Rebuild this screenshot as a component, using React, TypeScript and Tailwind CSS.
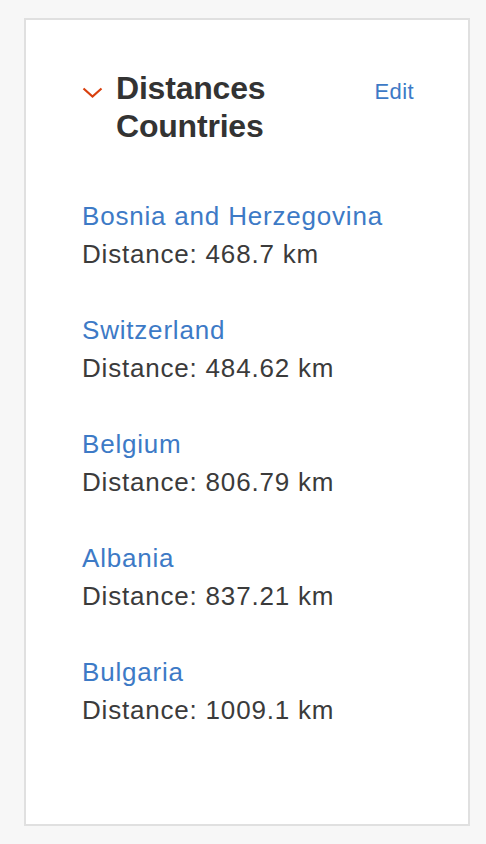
const COUNTRIES = [
  { name: 'Bosnia and Herzegovina', distance: '468.7' },
  { name: 'Switzerland', distance: '484.62' },
  { name: 'Belgium', distance: '806.79' },
  { name: 'Albania', distance: '837.21' },
  { name: 'Bulgaria', distance: '1009.1' },
]

export default function App() {
  return (
    <div className="min-h-screen bg-[#f7f7f7] pt-[18px] pl-[24px] pr-[16px] pb-[18px] font-['Liberation_Sans',Arial,sans-serif]">
      <section className="h-[808px] border-2 border-[#e0e0e0] bg-white pt-[49px] pl-[56px] pr-[54px]">
        <div className="flex items-start">
          <div className="mt-[18px] mr-[13px] w-[21px] shrink-0">
            <svg width="21" height="11" viewBox="0 0 21 11" fill="none">
              <path d="M1.5 1.5 L10.5 9.5 L19.5 1.5" stroke="#d9400e" strokeWidth="2.2" />
            </svg>
          </div>
          <h2 className="text-[32px] leading-[38px] font-bold text-[#333333] tracking-[-0.2px]">
            Distances
            <br />
            Countries
          </h2>
          <a className="ml-auto mt-[4px] text-[22px] leading-[37px] tracking-[0.4px] text-[#3d7ac6]">Edit</a>
        </div>

        <ul className="mt-[52px] flex flex-col gap-[38px]">
          {COUNTRIES.map((c) => (
            <li key={c.name} className="text-[26px] leading-[38px] tracking-[0.8px]">
              <a className="block text-[#3d7ac6]">{c.name}</a>
              <p className="text-[#3b3b3b]">Distance: {c.distance} km</p>
            </li>
          ))}
        </ul>
      </section>
    </div>
  )
}
